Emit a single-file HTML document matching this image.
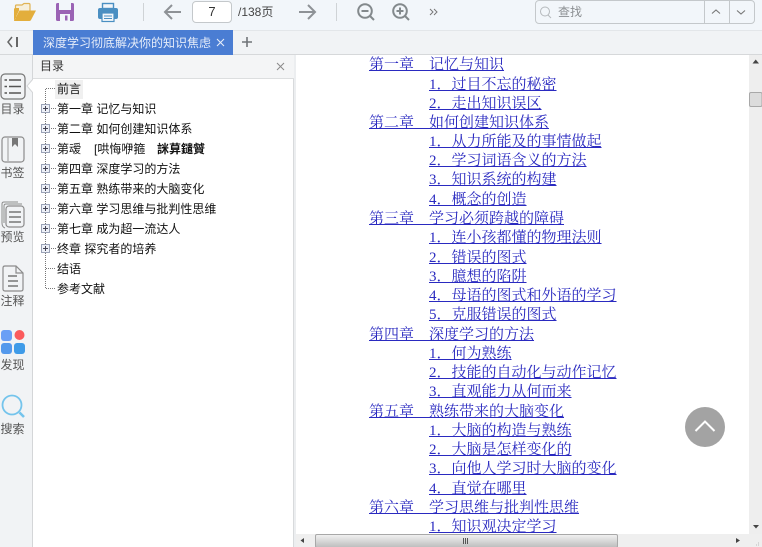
<!DOCTYPE html>
<html lang="zh">
<head>
<meta charset="utf-8">
<title>深度学习彻底解决你的知识焦虑</title>
<style>
*{box-sizing:border-box}
html,body{margin:0;padding:0;width:762px;height:547px;overflow:hidden;background:#fff;font-family:"Liberation Sans","Noto Sans CJK SC",sans-serif}
.a{position:absolute}
#top{left:0;top:0;width:762px;height:31px;background:#f2f6fa;border-bottom:1px solid #e3e6e9}
#tabs{left:0;top:31px;width:762px;height:24px;background:#f1f3f5;border-bottom:1px solid #d6d8da}
#tab{left:33px;top:30px;width:200px;height:25px;background:#4a7dd3;color:#e6edf9;font-size:12px;line-height:26px;padding-left:10px;white-space:nowrap;overflow:hidden}
#side{left:0;top:55px;width:33px;height:492px;background:#f1f3f5;border-right:1px solid #d4d6d8}
.sl{left:0;width:25px;text-align:center;font-size:12px;line-height:14px;color:#555;white-space:nowrap}
#panel{left:33px;top:55px;width:261px;height:492px;background:#fff;border-right:1px solid #d8dadc}
#phead{left:33px;top:55px;width:261px;height:24px;background:#f4f5f6;border-bottom:1px solid #dcdedf;font-size:12px;line-height:23px;padding-left:7px;color:#333}
#gut{left:294px;top:55px;width:2px;height:492px;background:#eceef0}
.t{left:57px;font-size:12px;line-height:16px;height:16px;color:#111;white-space:nowrap}
.c{font-family:"Liberation Serif","Noto Serif CJK SC",serif;font-size:15px;line-height:19px;height:19px;color:#2a2ac0;text-decoration:underline;white-space:pre}
.c1{left:369px}.c2{left:429px}
#vs{left:749px;top:55px;width:13px;height:479px;background:#eeeeee}
#hs{left:296px;top:534px;width:466px;height:13px;background:#efefef}
</style>
</head>
<body>
<div class="a" id="top"></div>
<svg class="a" style="left:0;top:0" width="762" height="31" xmlns="http://www.w3.org/2000/svg">
<path d="M15.5 18 V6 Q15.5 5 16.5 5 H22 L24 3.5 H29 Q30 3.5 30 5 V11" fill="#f6efdc" stroke="#e0b355" stroke-width="1.2"/>
<path d="M14 21 L19.5 10.5 H36 L31 20 Q30.5 21 29.5 21 Z" fill="#e3ae3c"/>
<path d="M14 9 V21 L19 10.5 V8 H16 Q14 8 14 9 Z" fill="#e3ae3c"/>
<rect x="56" y="3" width="18" height="18" rx="1.5" fill="#9a63b4"/>
<rect x="59" y="3" width="12" height="7" fill="#f2f6fa"/>
<rect x="60" y="14" width="10" height="7" fill="#f2f6fa"/>
<rect x="65" y="15.5" width="2.5" height="5" fill="#9a63b4"/>
<rect x="102.5" y="3.5" width="11" height="5" fill="#f2f6fa" stroke="#4a8fc2" stroke-width="1.4"/>
<rect x="98" y="8" width="20" height="11" rx="2" fill="#4a8fc2"/>
<rect x="102" y="13" width="12" height="8.5" fill="#f2f6fa" stroke="#4a8fc2" stroke-width="1.2"/>
<path d="M104 16h8M104 18.5h8" stroke="#4a8fc2" stroke-width="1"/>
<rect x="143" y="3" width="1" height="18" fill="#cfd3d6"/>
<path d="M181 12 H165 M172 5 L165 12 L172 19" fill="none" stroke="#8e9296" stroke-width="2"/>
<path d="M299 12 H315 M308 5 L315 12 L308 19" fill="none" stroke="#8e9296" stroke-width="2"/>
<rect x="336" y="3" width="1" height="18" fill="#cfd3d6"/>
<circle cx="365" cy="11" r="6.8" fill="none" stroke="#83898c" stroke-width="2"/>
<path d="M361.5 11h7M370 16 L374 20" stroke="#83898c" stroke-width="2" fill="none"/>
<circle cx="400" cy="11" r="6.8" fill="none" stroke="#83898c" stroke-width="2"/>
<path d="M396.5 11h7M400 7.5v7M405 16 L409 20" stroke="#83898c" stroke-width="2" fill="none"/>
<path d="M430 9 L433 12 L430 15 M434 9 L437 12 L434 15" fill="none" stroke="#777" stroke-width="1"/>
<circle cx="545" cy="11.5" r="4.5" fill="none" stroke="#b5b9bc" stroke-width="1"/>
<path d="M548 15 L551 18" stroke="#b5b9bc"/>
<path d="M712 13.5 L716 10 L720 13.5 M737 10.5 L741 14 L745 10.5" fill="none" stroke="#777" stroke-width="1.1"/>
</svg>
<div class="a" style="left:192px;top:1px;width:40px;height:22px;background:#fff;border:1px solid #c4c8cb;border-radius:4px;font-size:13px;line-height:20px;text-align:center;color:#333">7</div>
<div class="a" style="left:238px;top:4px;font-size:12px;line-height:16px;color:#444">/138页</div>
<div class="a" style="left:535px;top:0;width:220px;height:24px;border:1px solid #c4c8cb;border-radius:4px"></div>
<div class="a" style="left:704px;top:0;width:1px;height:24px;background:#c4c8cb"></div>
<div class="a" style="left:729px;top:0;width:1px;height:24px;background:#c4c8cb"></div>
<div class="a" style="left:558px;top:4px;font-size:12px;line-height:16px;color:#8b8f92">查找</div>

<div class="a" id="tabs"></div>
<svg class="a" style="left:0;top:31px" width="33" height="24" xmlns="http://www.w3.org/2000/svg">
<path d="M12 6 L8 11 L12 16" fill="none" stroke="#666" stroke-width="1.5"/>
<rect x="16" y="6" width="2" height="10" fill="#666"/>
</svg>
<div class="a" id="tab">深度学习彻底解决你的知识焦虑</div>
<div class="a" style="left:212px;top:30px;width:21px;height:25px;background:#4a7dd3"></div>
<svg class="a" style="left:215px;top:36px" width="14" height="14" xmlns="http://www.w3.org/2000/svg"><path d="M2 3 L9 10 M9 3 L2 10" stroke="#e6edf9" stroke-width="1.1"/></svg>
<svg class="a" style="left:240px;top:35px" width="14" height="14" xmlns="http://www.w3.org/2000/svg"><path d="M2 7 H12 M7 2 V12" stroke="#707478" stroke-width="1.6"/></svg>

<div class="a" id="side"></div>
<svg class="a" style="left:0;top:55px" width="34" height="392" xmlns="http://www.w3.org/2000/svg">
<rect x="1" y="19" width="24" height="25" rx="4" fill="none" stroke="#777" stroke-width="1.2"/>
<path d="M4.5 25h2.5M9 25h12M4.5 31.5h2.5M9 31.5h12M4.5 38h2.5M9 38h12" stroke="#555" stroke-width="1.5"/>
<path d="M33 24 L27 31 L33 38 Z" fill="#fff"/>
<path d="M33 24 L27 31 L33 38" fill="none" stroke="#d4d6d8"/>
<rect x="2" y="82" width="22" height="25" rx="3" fill="none" stroke="#8c8c8c" stroke-width="1.2"/>
<path d="M12 83 V92 L15 89 L18 92 V83 Z" fill="#777"/>
<path d="M8 83 V106" stroke="#999" stroke-width="1"/>
<path d="M2 154 V149 Q2 147 4 147 H18" fill="none" stroke="#8c8c8c"/>
<path d="M4 156 V151 Q4 149 6 149 H22" fill="none" stroke="#8c8c8c"/>
<rect x="6" y="151" width="18" height="21" rx="3" fill="#f1f3f5" stroke="#8c8c8c" stroke-width="1.2"/>
<path d="M2 154 V168 Q2 172 5 173 M4 156 V168" fill="none" stroke="#8c8c8c"/>
<path d="M9 157h12M9 162h12M9 167h12" stroke="#777" stroke-width="1.5"/>
<path d="M3 213 Q3 211 5 211 H16 L23 218 V234 Q23 236 21 236 H5 Q3 236 3 234 Z M16 211 V218 H23" fill="none" stroke="#8c8c8c" stroke-width="1.2"/>
<path d="M8 221h9M8 226h10M8 231h10" stroke="#777" stroke-width="1.5"/>
<rect x="1" y="275" width="11" height="11" rx="3" fill="#6a9ff5"/>
<circle cx="19.5" cy="280" r="5" fill="#fb5a5c"/>
<rect x="1" y="288" width="11" height="11" rx="3" fill="#5499ec"/>
<rect x="14" y="288" width="11" height="11" rx="3" fill="#3f9be8"/>
<circle cx="12" cy="350" r="9.5" fill="none" stroke="#74c4ec" stroke-width="1.8"/>
<path d="M19.5 357.5 L24 362" stroke="#74c4ec" stroke-width="2.6"/>
</svg>
<div class="a sl" style="top:102px">目录</div>
<div class="a sl" style="top:166px">书签</div>
<div class="a sl" style="top:230px">预览</div>
<div class="a sl" style="top:294px">注释</div>
<div class="a sl" style="top:358px">发现</div>
<div class="a sl" style="top:422px">搜索</div>

<div class="a" id="panel"></div>
<div class="a" id="phead">目录</div>
<svg class="a" style="left:276px;top:62px" width="10" height="10" xmlns="http://www.w3.org/2000/svg"><path d="M1 1 L8 8 M8 1 L1 8" stroke="#8a8a8a" stroke-width="1"/></svg>
<div class="a" style="left:55px;top:80px;width:28px;height:19px;background:#f0f0f0"></div>
<svg class="a" style="left:33px;top:79px" width="26" height="220" xmlns="http://www.w3.org/2000/svg">
<path d="M12.5 10 V210" stroke="#777" stroke-width="1" stroke-dasharray="1 1"/>
<path d="M13 9.5 H23 M18 29.5 H23 M18 49.5 H23 M18 69.5 H23 M18 89.5 H23 M18 109.5 H23 M18 129.5 H23 M18 149.5 H23 M18 169.5 H23 M13 189.5 H23 M13 209.5 H23" stroke="#777" stroke-width="1" stroke-dasharray="1 1"/>
<g fill="#eef1f8" stroke="#9aa2b6" stroke-width="1">
<rect x="8.5" y="25.5" width="8" height="8"/><rect x="8.5" y="45.5" width="8" height="8"/><rect x="8.5" y="65.5" width="8" height="8"/><rect x="8.5" y="85.5" width="8" height="8"/><rect x="8.5" y="105.5" width="8" height="8"/><rect x="8.5" y="125.5" width="8" height="8"/><rect x="8.5" y="145.5" width="8" height="8"/><rect x="8.5" y="165.5" width="8" height="8"/>
</g>
<path d="M10 29.5h5M12.5 27v5M10 49.5h5M12.5 47v5M10 69.5h5M12.5 67v5M10 89.5h5M12.5 87v5M10 109.5h5M12.5 107v5M10 129.5h5M12.5 127v5M10 149.5h5M12.5 147v5M10 169.5h5M12.5 167v5" stroke="#445" stroke-width="1"/>
</svg>
<div class="a t" style="top:81px">前言</div>
<div class="a t" style="top:101px">第一章 记忆与知识</div>
<div class="a t" style="top:121px">第二章 如何创建知识体系</div>
<div class="a t" style="top:141px">第叆</div>
<div class="a t" style="top:141px;left:94px">[哄悔咿箍</div>
<div class="a t" style="top:141px;left:157px;font-weight:bold">詸萛鑓贙</div>
<div class="a t" style="top:161px">第四章 深度学习的方法</div>
<div class="a t" style="top:181px">第五章 熟练带来的大脑变化</div>
<div class="a t" style="top:201px">第六章 学习思维与批判性思维</div>
<div class="a t" style="top:221px">第七章 成为超一流达人</div>
<div class="a t" style="top:241px">终章 探究者的培养</div>
<div class="a t" style="top:261px">结语</div>
<div class="a t" style="top:281px">参考文献</div>

<div class="a" id="gut"></div>

<div class="a c c1" style="top:56px">第一章　记忆与知识</div>
<div class="a c c2" style="top:76px">1．过目不忘的秘密</div>
<div class="a c c2" style="top:95px">2．走出知识误区</div>
<div class="a c c1" style="top:114px">第二章　如何创建知识体系</div>
<div class="a c c2" style="top:133px">1．从力所能及的事情做起</div>
<div class="a c c2" style="top:152px">2．学习词语含义的方法</div>
<div class="a c c2" style="top:171px">3．知识系统的构建</div>
<div class="a c c2" style="top:191px">4．概念的创造</div>
<div class="a c c1" style="top:210px">第三章　学习必须跨越的障碍</div>
<div class="a c c2" style="top:229px">1．连小孩都懂的物理法则</div>
<div class="a c c2" style="top:249px">2．错误的图式</div>
<div class="a c c2" style="top:268px">3．臆想的陷阱</div>
<div class="a c c2" style="top:287px">4．母语的图式和外语的学习</div>
<div class="a c c2" style="top:306px">5．克服错误的图式</div>
<div class="a c c1" style="top:326px">第四章　深度学习的方法</div>
<div class="a c c2" style="top:345px">1．何为熟练</div>
<div class="a c c2" style="top:364px">2．技能的自动化与动作记忆</div>
<div class="a c c2" style="top:383px">3．直观能力从何而来</div>
<div class="a c c1" style="top:403px">第五章　熟练带来的大脑变化</div>
<div class="a c c2" style="top:422px">1．大脑的构造与熟练</div>
<div class="a c c2" style="top:441px">2．大脑是怎样变化的</div>
<div class="a c c2" style="top:460px">3．向他人学习时大脑的变化</div>
<div class="a c c2" style="top:480px">4．直觉在哪里</div>
<div class="a c c1" style="top:499px">第六章　学习思维与批判性思维</div>
<div class="a c c2" style="top:518px">1．知识观决定学习</div>

<div class="a" id="vs"></div>
<svg class="a" style="left:749px;top:55px" width="13" height="492" xmlns="http://www.w3.org/2000/svg">
<path d="M3.5 8.5 H10 L6.7 4.5 Z" fill="#444"/>
<rect x="0.5" y="37.5" width="12.5" height="14" rx="1.5" fill="#dcdcdc" stroke="#a8a8a8"/>
<path d="M4 470 H10 L7 473.5 Z" fill="#444"/>
</svg>
<div class="a" id="hs"></div>
<svg class="a" style="left:296px;top:534px" width="466" height="13" xmlns="http://www.w3.org/2000/svg">
<defs><linearGradient id="g" x1="0" y1="0" x2="0" y2="1"><stop offset="0" stop-color="#f2f2f2"/><stop offset="1" stop-color="#bdbdbd"/></linearGradient></defs>
<path d="M8 4 L4.5 6.5 L8 9 Z" fill="#444"/>
<rect x="19.5" y="0.5" width="302" height="13" rx="1.5" fill="url(#g)" stroke="#a8a8a8"/>
<path d="M167.5 4V10M169.5 4V10M171.5 4V10" stroke="#555"/>
<path d="M440 4 L444 6.5 L440 9 Z" fill="#444"/>
<path d="M462 11h1M460 11h1M462 9h1" stroke="#bbb"/>
</svg>

<svg class="a" style="left:685px;top:407px" width="40" height="40" xmlns="http://www.w3.org/2000/svg">
<circle cx="20" cy="20" r="20" fill="#a3a3a3"/>
<path d="M10.5 24 L20 14.5 L29.5 24" fill="none" stroke="#fff" stroke-width="2"/>
</svg>
</body>
</html>
